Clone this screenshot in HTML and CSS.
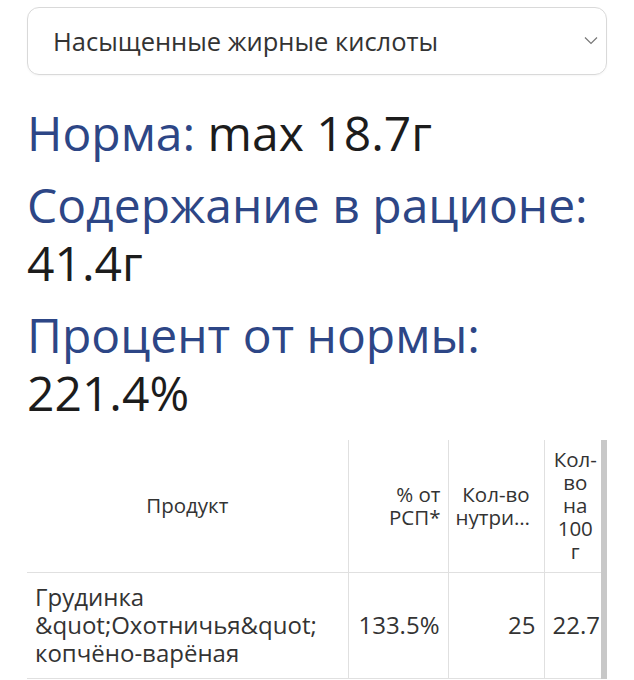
FILE: index.html
```html
<!DOCTYPE html>
<html lang="ru">
<head>
<meta charset="utf-8">
<link rel="stylesheet" href="styles.css">
</head>
<body>
<div class="page">
  <div class="select">
    <span class="select-text">Насыщенные жирные кислоты</span>
    <svg class="chevron" width="14" height="9" viewBox="0 0 14 9"><path d="M1 1.5 L7 7.5 L13 1.5" fill="none" stroke="#777" stroke-width="1.2"/></svg>
  </div>
  <div class="stats">
    <div class="stat"><span class="label">Норма:</span> <span class="value">max 18.7г</span></div>
    <div class="stat"><span class="label">Содержание в рационе:</span> <span class="value">41.4г</span></div>
    <div class="stat"><span class="label">Процент от нормы:</span> <span class="value">221.4%</span></div>
  </div>
  <div class="table-wrap">
    <table class="tbl">
      <colgroup>
        <col class="c1"><col class="c2"><col class="c3"><col class="c4">
      </colgroup>
      <thead>
        <tr>
          <th class="center">Продукт</th>
          <th class="right">% от РСП*</th>
          <th class="center"><span class="ln">Кол-во</span><span class="ln ell">нутриента</span></th>
          <th class="center">Кол-во на 100 г</th>
        </tr>
      </thead>
      <tbody>
        <tr>
          <td>Грудинка &amp;quot;Охотничья&amp;quot; копчёно-варёная</td>
          <td class="right">133.5%</td>
          <td class="right">25</td>
          <td class="right">22.7</td>
        </tr>
      </tbody>
    </table>
  </div>
</div>
</body>
</html>
```
FILE: styles.css
```css
html, body {
  margin: 0;
  padding: 0;
  background: #fff;
}
body {
  font-family: "Open Sans", "Noto Sans", sans-serif;
  color: #222;
}
.page {
  padding: 7px 27px 0 27px;
}
.select {
  height: 66px;
  border: 1px solid #d9d9d9;
  border-radius: 12px;
  display: flex;
  align-items: center;
  justify-content: space-between;
  padding: 0 8px 0 25px;
  box-shadow: 0 1px 2px rgba(0,0,0,0.04);
}
.select-text {
  font-size: 25.5px;
  color: #333;
}
.chevron {
  margin-top: -2px;
}
.stats {
  margin-top: 29px;
  display: flex;
  flex-direction: column;
  gap: 14px;
}
.stat {
  font-size: 48px;
  line-height: 58px;
  font-weight: 500;
}
.label {
  color: #2d4686;
}
.value {
  color: #1c1c1c;
}
.table-wrap {
  margin-top: 18px;
  width: 574px;
  overflow: hidden;
  border-right: 6px solid #c8c8c8;
}
.tbl {
  width: 579px;
  table-layout: fixed;
  border-collapse: collapse;
  color: #333;
}
.c1 { width: 321px; }
.c2 { width: 100px; }
.c3 { width: 96px; }
.c4 { width: 62px; }
.tbl th {
  font-size: 20.5px;
  font-weight: 500;
  line-height: 23px;
  padding: 6px 7px;
  height: 132px;
  box-sizing: border-box;
  vertical-align: middle;
  border-left: 1px solid #e0e0e0;
  border-bottom: 1px solid #e0e0e0;
}
.tbl th:first-child,
.tbl td:first-child {
  border-left: none;
}
.tbl td {
  font-size: 24px;
  line-height: 28px;
  padding: 10px 8px;
  height: 106px;
  box-sizing: border-box;
  vertical-align: middle;
  border-left: 1px solid #e0e0e0;
  border-bottom: 1px solid #e0e0e0;
}
.center { text-align: center; }
.right { text-align: right; }
.ln {
  display: block;
}
.ell {
  white-space: nowrap;
  overflow: hidden;
  text-overflow: ellipsis;
}
```
